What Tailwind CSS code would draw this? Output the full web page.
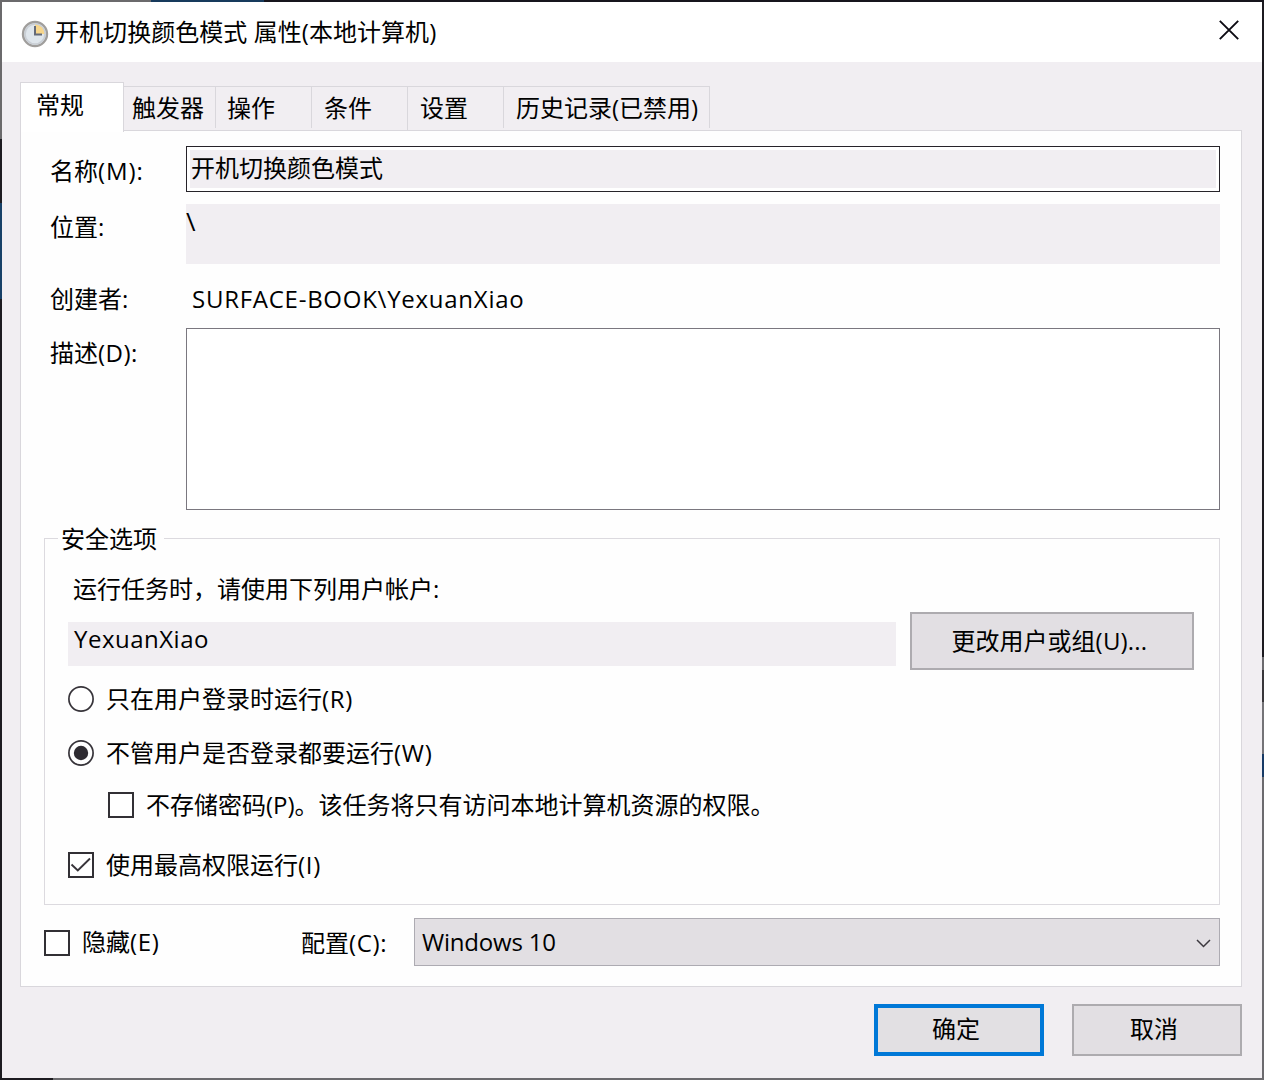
<!DOCTYPE html>
<html lang="zh-CN">
<head>
<meta charset="utf-8">
<title>开机切换颜色模式 属性</title>
<script src="https://cdn.jsdelivr.net/npm/@tailwindcss/browser@4"></script>
</head>
<body class="w-[1264px] h-[1080px] overflow-hidden">
<div class="w-[1264px] h-[1080px] grid grid-cols-[2px_1260px_2px] grid-rows-[2px_1076px_2px] font-['Open_Sans','Noto_Sans_CJK_SC',sans-serif] text-[24px] leading-[32px] text-black whitespace-nowrap">
  <!-- desktop strip above the window -->
  <div class="col-span-3 flex"><i class="w-[151px] bg-[#6b6a6c]"></i><i class="w-[113px] bg-[#173a5c]"></i><i class="flex-1 bg-[#17151d]"></i></div>
  <div class="flex flex-col"><i class="h-[137px] bg-[#6b6a6c]"></i><i class="h-[64px] bg-[#1d1b20]"></i><i class="h-[96px] bg-[#174068]"></i><i class="flex-1 bg-[#1d1b20]"></i></div>

  <main class="bg-[#f1eef2] flex flex-col">
    <header class="h-[60px] bg-white flex items-center pl-[19px] pr-[23px]">
      <svg class="w-[28px] h-[28px] mt-[3px]" viewBox="0 0 28 28">
        <circle cx="14" cy="14" r="12" fill="#dfe6ec" stroke="#a09e9c" stroke-width="2.4"/>
        <circle cx="14" cy="14" r="10" fill="none" stroke="#c9ced4" stroke-width="1.6"/>
        <path d="M14 14V4.500A9.500 9.500 0 0 1 23.500 14Z" fill="#f7d68c"/>
        <path d="M14 6V14.500H21" fill="none" stroke="#646a78" stroke-width="2"/>
      </svg>
      <h1 class="ml-[6px] -mt-px tracking-[0.050px]">开机切换颜色模式 属性(本地计算机)</h1>
      <svg class="ml-auto w-[20px] h-[20px] mb-[4px]" viewBox="0 0 20 20"><path d="M.8.800 19.200 19.200M19.200.800.800 19.200" stroke="#0c0a12" stroke-width="1.9" fill="none"/></svg>
    </header>

    <nav class="h-[68px] pl-[18px] flex items-end">
      <div class="relative z-10 -mb-[2px] h-[50px] w-[104px] bg-white border border-b-0 border-[#d9d7dc] pl-[15px] pt-[6px]">常规</div>
      <div class="h-[44px] w-[92px] border-t border-[#d9d7dc] pl-[8px] pt-[5px] relative">触发器<i class="absolute right-0 top-0 h-[41px] w-px bg-[#d9d7dc]"></i></div>
      <div class="h-[44px] w-[96px] border-t border-[#d9d7dc] pl-[11px] pt-[5px] relative">操作<i class="absolute right-0 top-0 h-[41px] w-px bg-[#d9d7dc]"></i></div>
      <div class="h-[44px] w-[96px] border-t border-[#d9d7dc] pl-[12px] pt-[5px] relative">条件<i class="absolute right-0 top-0 h-[43px] w-px bg-[#d9d7dc]"></i></div>
      <div class="h-[44px] w-[96px] border-t border-[#d9d7dc] pl-[12px] pt-[5px] relative">设置<i class="absolute right-0 top-0 h-[41px] w-px bg-[#d9d7dc]"></i></div>
      <div class="h-[44px] w-[206px] border-t border-[#d9d7dc] pl-[12px] pt-[5px] relative">历史记录(已禁用)<i class="absolute right-0 top-0 h-[41px] w-px bg-[#d9d7dc]"></i></div>
    </nav>

    <section class="ml-[18px] w-[1222px] h-[857px] bg-[#fefefe] border border-[#d9d7dc] px-[23px] pr-[21px] pt-[15px] flex flex-col">
      <div class="flex h-[46px]">
        <label class="w-[142px] pl-[6px] pt-[9px]">名称<span class="tracking-[0.900px]">(M):</span></label>
        <div class="w-[1034px] border border-[#262329] bg-white p-[3px]"><div class="h-full bg-[#f1eef2] pl-px pt-[2px]">开机切换颜色模式</div></div>
      </div>
      <div class="flex h-[60px] mt-[12px]">
        <label class="w-[142px] pl-[6px] pt-[7px]">位置:</label>
        <div class="w-[1034px] bg-[#f1eef2] pt-px text-[26px]">\</div>
      </div>
      <div class="flex h-[32px] mt-[19px]">
        <label class="w-[142px] pl-[6px]">创建者:</label>
        <div class="pl-[6px] tracking-[0.740px]">SURFACE-BOOK\YexuanXiao</div>
      </div>
      <div class="flex h-[182px] mt-[13px]">
        <label class="w-[142px] pl-[6px] pt-[9px]">描述<span class="tracking-[0.500px]">(D):</span></label>
        <div class="w-[1034px] border border-[#7a777f] bg-white"></div>
      </div>

      <div class="mt-[28px] h-[367px] w-[1176px] border border-[#dcdadf] pl-[23px] flex flex-col">
        <div class="-mt-[16px] -ml-[10px] w-[106px] bg-[#fefefe] pl-[3px] h-[32px]">安全选项</div>
        <div class="mt-[18px] pl-[5px]">运行任务时，请使用下列用户帐户:</div>
        <div class="flex mt-[7px]">
          <div class="mt-[10px] w-[828px] h-[44px] bg-[#f1eef2] pl-[6px] pt-px tracking-[0.500px]">YexuanXiao</div>
          <button class="ml-[14px] w-[284px] h-[58px] border-2 border-[#adabaf] bg-[#e2dfe3] pr-[5px]">更改用户或组<span class="tracking-[0.200px]">(U)...</span></button>
        </div>
        <div class="flex items-center mt-[13px] h-[32px]">
          <svg class="w-[26px] h-[26px]" viewBox="0 0 26 26"><circle cx="13" cy="13" r="12.100" fill="#fff" stroke="#37343a" stroke-width="1.700"/></svg>
          <span class="ml-[12px]">只在用户登录时运行<span class="tracking-[0.700px]">(R)</span></span>
        </div>
        <div class="flex items-center mt-[22px] h-[32px]">
          <svg class="w-[26px] h-[26px]" viewBox="0 0 26 26"><circle cx="13" cy="13" r="12.100" fill="#fff" stroke="#37343a" stroke-width="1.700"/><circle cx="13" cy="13" r="7.200" fill="#2f2c32"/></svg>
          <span class="ml-[12px]">不管用户是否登录都要运行<span class="tracking-[0.700px]">(W)</span></span>
        </div>
        <div class="flex items-center mt-[20px] h-[32px] pl-[40px]">
          <i class="w-[26px] h-[26px] border-2 border-[#323035] bg-white"></i>
          <span class="ml-[12px]">不存储密码(P)。该任务将只有访问本地计算机资源的权限。</span>
        </div>
        <div class="flex items-center mt-[28px] h-[32px]">
          <svg class="w-[26px] h-[26px]" viewBox="0 0 26 26"><path d="M1 1H25V25H1Z" fill="#fff" stroke="#323035" stroke-width="2"/><path d="M3.500 12.500 9.800 18.500 22 6.500" fill="none" stroke="#37343a" stroke-width="1.900"/></svg>
          <span class="ml-[12px]">使用最高权限运行<span class="tracking-[0.700px]">(I)</span></span>
        </div>
      </div>

      <div class="flex items-center mt-[13px] h-[48px]">
        <i class="mt-[2px] w-[26px] h-[26px] border-2 border-[#323035] bg-white"></i>
        <span class="ml-[12px] w-[219px] -mt-px">隐藏<span class="tracking-[0.700px]">(E)</span></span>
        <span class="w-[113px] pt-[2px]">配置<span class="tracking-[0.700px]">(C):</span></span>
        <div class="w-[806px] h-[48px] border border-[#adabb2] bg-[#e2dfe3] flex items-center justify-between pl-[7px] pr-[8px]">
          <span class="tracking-[-0.200px]">Windows 10</span>
          <svg class="w-[15px] h-[9px] mt-[3px]" viewBox="0 0 15 9"><path d="M1 1 7.500 7.500 14 1" fill="none" stroke="#3c393f" stroke-width="1.500"/></svg>
        </div>
      </div>
    </section>

    <footer class="mt-[17px] flex justify-end gap-[28px] pr-[20px]">
      <button class="w-[170px] h-[52px] border-4 border-[#0078d7] bg-[#e2e0e3] pr-[6px] pb-[2px]">确定</button>
      <button class="w-[170px] h-[52px] border-2 border-[#adabaf] bg-[#e2dfe3] pr-[6px] pb-[2px]">取消</button>
    </footer>
  </main>

  <div class="flex flex-col"><i class="h-[655px] bg-[#1c1a20]"></i><i class="h-[13px] bg-[#6b6a6e]"></i><i class="h-[32px] bg-[#38363a]"></i><i class="h-[52px] bg-[#747377]"></i><i class="h-[23px] bg-[#173a66]"></i><i class="flex-1 bg-[#6b6a6e]"></i></div>
  <div class="col-span-3 flex"><i class="w-[53px] bg-[#1d1b20]"></i><i class="flex-1 bg-[#6b6a6e]"></i></div>
</div>
</body>
</html>
